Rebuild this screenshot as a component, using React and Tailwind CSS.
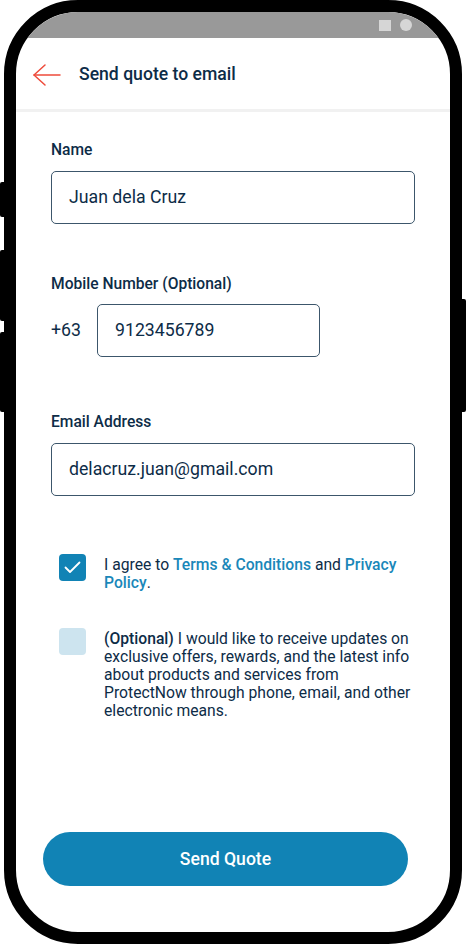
import { useState } from 'react'

function BackArrow() {
  return (
    <svg width="30" height="24" viewBox="0 0 30 24" fill="none" stroke="#ee4b3b" strokeWidth="1.5" strokeLinecap="round" strokeLinejoin="round">
      <path d="M2 12H28" />
      <path d="M13 2L2 12L13 22" />
    </svg>
  )
}

function Checkbox({ checked }) {
  return (
    <div className={checked ? "w-[27px] h-[27px] shrink-0 rounded-[4px] bg-[#1183b5] flex items-center justify-center" : "w-[27px] h-[27px] shrink-0 rounded-[4px] bg-[#cde4ef]"}>
      {checked && (
        <svg width="17" height="13" viewBox="0 0 17 13" fill="none" stroke="white" strokeWidth="1.8" strokeLinecap="round" strokeLinejoin="round">
          <path d="M1.5 6.5L6 11L15.5 1.5" />
        </svg>
      )}
    </div>
  )
}

function Field({ label, value, className }) {
  return (
    <div className={className}>
      <div className="text-[15.6px] leading-[18px] font-medium text-[#0d2c47]">{label}</div>
      <div className="mt-[12px] h-[53px] border border-[#3c566b] rounded-[5px] flex items-center pl-[17px] text-[17.7px] text-[#0d2c47]">
        {value}
      </div>
    </div>
  )
}

export default function App() {
  const [agree] = useState(true)

  return (
    <div className="w-[466px] h-[945px] bg-white pl-[4px] font-['Roboto',sans-serif]">
      <div className="relative w-[458px] h-[944px]">
        {/* side buttons */}
        <div className="absolute left-[-4px] top-[182px] w-[8px] h-[35px] bg-black rounded-l-[2px]" />
        <div className="absolute left-[-4px] top-[250px] w-[8px] h-[71px] bg-black rounded-l-[2px]" />
        <div className="absolute left-[-4px] top-[332px] w-[8px] h-[80px] bg-black rounded-l-[2px]" />
        <div className="absolute right-[-4px] top-[299px] w-[8px] h-[113px] bg-black rounded-r-[2px]" />

        <div className="relative w-full h-full border-[12px] border-black rounded-[74px] overflow-hidden bg-white flex flex-col">
          {/* status bar */}
          <div className="h-[26px] shrink-0 bg-[#999999] flex items-center justify-end gap-[9px] pr-[38px]">
            <div className="w-[12px] h-[11px] bg-[#d6d6d6]" />
            <div className="w-[12px] h-[12px] rounded-full bg-[#d6d6d6]" />
          </div>

          {/* header */}
          <div className="h-[74px] shrink-0 flex items-center pl-[16px] pt-[2px] border-b-[3px] border-[#f1f1f1]">
            <BackArrow />
            <span className="ml-[17px] text-[17.6px] font-medium text-[#0d2c47]">Send quote to email</span>
          </div>

          {/* form */}
          <div className="flex-1 flex flex-col px-[35px]">
            <Field className="mt-[29px]" label="Name" value="Juan dela Cruz" />

            <div className="mt-[51px]">
              <div className="text-[15.6px] leading-[18px] font-medium text-[#0d2c47]">Mobile Number (Optional)</div>
              <div className="mt-[11px] flex items-center">
                <span className="w-[46px] text-[17.7px] text-[#0d2c47]">+63</span>
                <div className="w-[223px] h-[53px] border border-[#3c566b] rounded-[5px] flex items-center pl-[17px] text-[17.7px] text-[#0d2c47]">
                  9123456789
                </div>
              </div>
            </div>

            <Field className="mt-[56px]" label="Email Address" value="delacruz.juan@gmail.com" />

            <div className="mt-[58px] pl-[8px] flex gap-[18px]">
              <Checkbox checked={agree} />
              <p className="pt-[2px] text-[15.7px] leading-[18px] text-[#0d2c47]">
                I agree to <span className="font-medium text-[#1a87b9]">Terms &amp; Conditions</span> and <span className="font-medium text-[#1a87b9]">Privacy Policy</span>.
              </p>
            </div>

            <div className="mt-[36px] pl-[8px] flex gap-[18px]">
              <Checkbox checked={false} />
              <p className="pt-[2px] text-[15.7px] leading-[18px] text-[#0d2c47]">
                <span className="font-medium">(Optional)</span> I would like to receive updates on exclusive offers, rewards, and the latest info about products and services from ProtectNow through phone, email, and other electronic means.
              </p>
            </div>

            <div className="flex-1" />

            <button className="mb-[46px] ml-[-8px] w-[365px] h-[54px] rounded-full bg-[#1183b5] text-white text-[17.6px] font-medium">
              Send Quote
            </button>
          </div>
        </div>
      </div>
    </div>
  )
}
